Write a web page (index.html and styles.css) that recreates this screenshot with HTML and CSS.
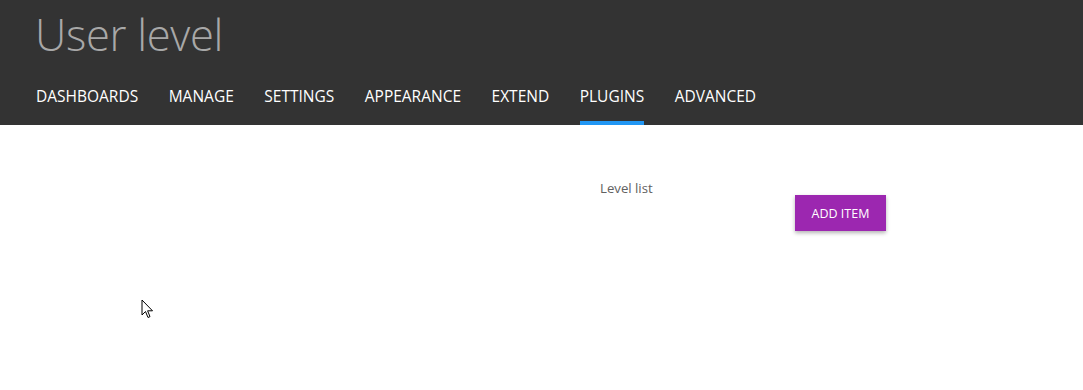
FILE: index.html
```html
<!DOCTYPE html>
<html lang="en">
<head>
    <meta charset="UTF-8">
    <meta name="viewport" content="width=device-width, initial-scale=1.0">
    <title>User level</title>
    <link rel="stylesheet" href="styles.css">
</head>
<body>
    <div class="header">
        <h1>User level</h1>
        <ul class="nav">
            <li>DASHBOARDS</li>
            <li>MANAGE</li>
            <li>SETTINGS</li>
            <li>APPEARANCE</li>
            <li>EXTEND</li>
            <li class="active">PLUGINS</li>
            <li>ADVANCED</li>
        </ul>
    </div>
    <div class="content">
        <div class="panel">
            <p class="title">Level list</p>
            <button class="add_btn">ADD ITEM</button>
        </div>
    </div>
    <svg class="cursor" width="13" height="20" viewBox="0 0 13 20">
        <path d="M1 1 L1 16 L4.5 12.5 L7 18.5 L9 17.6 L6.6 11.8 L11.5 11.8 Z" fill="#fff" stroke="#000" stroke-width="1" stroke-linejoin="round"/>
    </svg>
</body>
</html>
```

FILE: styles.css
```css
body {margin:0; font-family: "Open Sans", "Noto Sans", sans-serif; background:#fff; position:relative; height:390px; overflow:hidden;}
.header {background:#333333; height:125px; padding-left:35px; box-sizing:border-box;}
.header h1 {margin:0; padding-top:5px; font-size:43.5px; font-weight:300; color:#a8a8a8; line-height:60px; letter-spacing:-0.3px;}
.nav {list-style:none; margin:0; padding:0; display:flex; gap:30.5px; margin-top:21px; margin-left:1px;}
.nav li {color:#fff; font-size:15.5px; line-height:20px; padding-bottom:15px; border-bottom:4px solid transparent;}
.nav li.active {border-bottom-color:#2196f3;}
.content {padding-left:600px; padding-top:54px;}
.panel {display:flex; align-items:flex-start;}
.title {margin:0; font-size:13.2px; color:#616161; line-height:18px; width:195px;}
.add_btn {margin-top:16px; width:91px; height:36px; border:none; background:#9c27b0; color:#fff; font-family:inherit; font-size:12.5px; box-shadow:0 2px 4px rgba(0,0,0,0.3); padding:0;}
.cursor {position:absolute; left:141px; top:299px;}
```
